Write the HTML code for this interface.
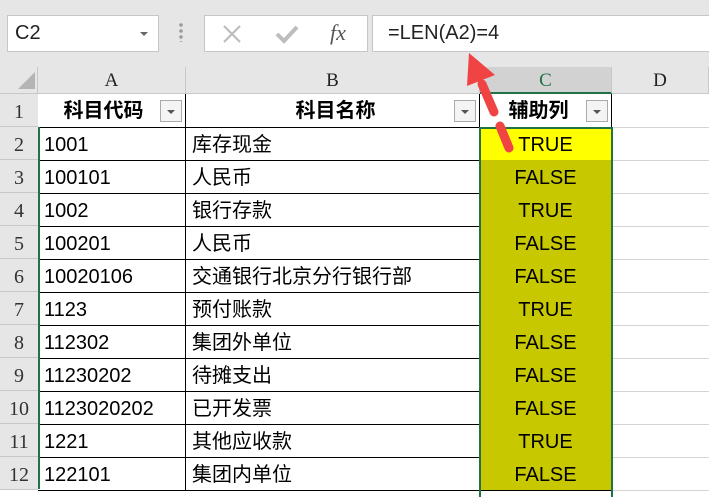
<!DOCTYPE html>
<html><head><meta charset="utf-8"><style>
*{margin:0;padding:0;box-sizing:border-box}
body{width:709px;height:489px;overflow:hidden;background:#fff;position:relative;font-family:"Liberation Sans","Noto Sans CJK SC",sans-serif}
.a{position:absolute}
.top{left:0;top:0;width:709px;height:67px;background:#e6e6e6}
.box{background:#fff;border:1px solid #c6c6c6}
.colh{top:67px;height:27px;background:#e6e6e6;border-right:1px solid #c8c8c8;border-bottom:1px solid #c8c8c8;font-family:"Liberation Serif",serif;font-size:19px;text-align:center;line-height:28px;color:#222}
.rowh{left:0;width:38px;height:33px;background:#e6e6e6;border-bottom:1px solid #c8c8c8;font-family:"Liberation Serif",serif;font-size:20px;text-align:center;line-height:36px;color:#333}
.c{height:34px;border:1px solid #000;border-left:none;border-top:none;font-size:20px;line-height:37px;padding-left:6px;white-space:nowrap;color:#000}
.h{font-weight:bold;text-align:center;line-height:34px}
.f{position:absolute;right:3px;top:6px;width:22px;height:22px;border:1px solid #aaa;background:#f4f4f4}
.f:after{content:"";position:absolute;left:6px;top:9px;border-left:4px solid transparent;border-right:4px solid transparent;border-top:4px solid #555}
.v{text-align:center;padding:0}
</style></head><body>
<div class="a top"></div>
<div class="a box" style="left:7px;top:15px;width:152px;height:37px;font-size:20px;line-height:35px;padding-left:7px;color:#222">C2</div>
<div class="a" style="left:140px;top:32px;border-left:4px solid transparent;border-right:4px solid transparent;border-top:4px solid #666"></div>
<div class="a" style="left:179px;top:22px;width:4px;height:20px;background:radial-gradient(circle,#999 1.5px,transparent 2px) 0 0/4px 6px"></div>
<div class="a box" style="left:204px;top:15px;width:164px;height:37px"></div>
<svg class="a" style="left:204px;top:15px" width="164" height="37">
<g stroke="#bdbdbd" stroke-width="2.2" fill="none">
<line x1="20" y1="11" x2="36" y2="27"/><line x1="36" y1="11" x2="20" y2="27"/>
<polyline points="73,19 80,26 93,12" stroke-width="4"/>
</g></svg>
<div class="a" style="left:330px;top:17px;font-family:'Liberation Serif',serif;font-style:italic;font-size:22px;color:#555;line-height:32px">fx</div>
<div class="a box" style="left:372px;top:15px;width:340px;height:37px;font-size:20px;line-height:35px;padding-left:15px;color:#222">=LEN(A2)=4</div>
<div class="a colh" style="left:0;width:38px"></div>
<div class="a" style="left:18px;top:72px;border-left:17px solid transparent;border-bottom:17px solid #b4b4b4"></div>
<div class="a colh" style="left:38px;width:148px">A</div>
<div class="a colh" style="left:186px;width:294px">B</div>
<div class="a colh" style="left:480px;width:132px;background:#d2d2d2;color:#217346;border-bottom:2px solid #217346">C</div>
<div class="a colh" style="left:612px;width:97px">D</div>
<div id="g"></div>
<svg class="a" style="left:0;top:0" width="709" height="489">
<g stroke="#f04444" stroke-width="9" stroke-linecap="round">
<line x1="482" y1="84" x2="494" y2="112"/>
<line x1="500" y1="126" x2="509" y2="148"/>
</g>
<polygon points="469,53 467,86 495,75" fill="#f04444"/>
</svg>
<script>
var rows=[["科目代码","科目名称","辅助列"],["1001","库存现金","TRUE"],["100101","人民币","FALSE"],["1002","银行存款","TRUE"],["100201","人民币","FALSE"],["10020106","交通银行北京分行银行部","FALSE"],["1123","预付账款","TRUE"],["112302","集团外单位","FALSE"],["11230202","待摊支出","FALSE"],["1123020202","已开发票","FALSE"],["1221","其他应收款","TRUE"],["122101","集团内单位","FALSE"]];
var h="";
rows.forEach(function(r,i){var y=94+i*33;
h+='<div class="a rowh" style="top:'+y+'px">'+(i+1)+'</div>';
if(i==0){
h+='<div class="a c h" style="left:38px;top:'+y+'px;width:148px;padding-right:22px">'+r[0]+'<span class="f"></span></div>';
h+='<div class="a c h" style="left:186px;top:'+y+'px;width:294px">'+r[1]+'<span class="f"></span></div>';
h+='<div class="a c h" style="left:480px;top:'+y+'px;width:132px;padding-right:20px">'+r[2]+'<span class="f"></span></div>';
}else{
h+='<div class="a c" style="left:38px;top:'+y+'px;width:148px">'+r[0]+'</div>';
h+='<div class="a c" style="left:186px;top:'+y+'px;width:294px">'+r[1]+'</div>';
h+='<div class="a c v" style="left:480px;top:'+y+'px;width:132px;background:'+(i==1?'#ffff00':'#c8c800')+'">'+r[2]+'</div>';
}
h+='<div class="a" style="left:612px;top:'+(y+33)+'px;width:97px;height:1px;background:#d4d4d4"></div>';
});
h+='<div class="a" style="left:38px;top:127px;width:2px;height:362px;background:#217346"></div>';
h+='<div class="a" style="left:479px;top:127px;width:134px;height:370px;border:2px solid #217346;border-bottom:none"></div>';
document.getElementById("g").innerHTML=h;
</script>
</body></html>
